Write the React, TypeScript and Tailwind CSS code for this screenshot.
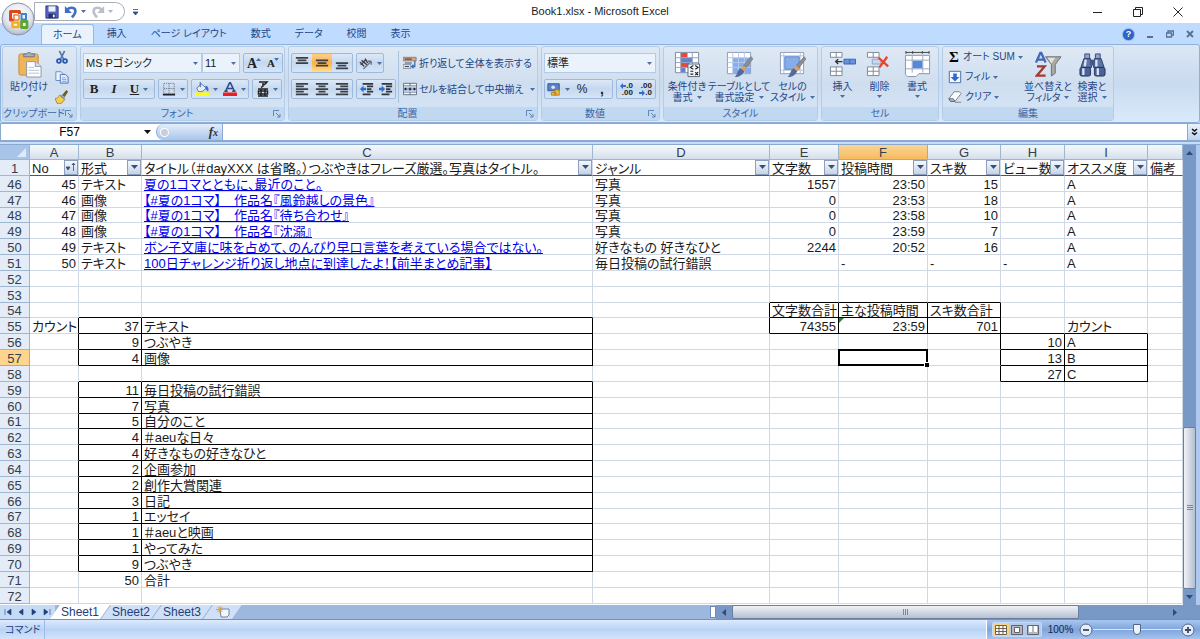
import { useState } from "react";
import type { ReactNode } from "react";
import clsx from "clsx";

type ColumnId = "A" | "B" | "C" | "D" | "E" | "F" | "G" | "H" | "I" | "J";

type CellData = {
  value: string;
  align?: "right";
  link?: boolean;
};

type RowData = {
  no: number;
  cells: Partial<Record<ColumnId, CellData>>;
};

const columns: { id: ColumnId; width: string }[] = [
  { id: "A", width: "w-[49px]" },
  { id: "B", width: "w-[63px]" },
  { id: "C", width: "w-[451px]" },
  { id: "D", width: "w-[177px]" },
  { id: "E", width: "w-[69px]" },
  { id: "F", width: "w-[89px]" },
  { id: "G", width: "w-[73px]" },
  { id: "H", width: "w-[64px]" },
  { id: "I", width: "w-[83px]" },
  { id: "J", width: "w-auto" },
];

const headings: Record<ColumnId, string> = {
  A: "No",
  B: "形式",
  C: "タイトル（＃dayXXX は省略。）つぶやきはフレーズ厳選。写真はタイトル。",
  D: "ジャンル",
  E: "文字数",
  F: "投稿時間",
  G: "スキ数",
  H: "ビュー数",
  I: "オススメ度",
  J: "備考",
};

// Ranges that carry a black outline and inner lines.
const boxes = [
  { from: "B", to: "C", top: 55, bottom: 57 },
  { from: "B", to: "C", top: 59, bottom: 70 },
  { from: "E", to: "G", top: 54, bottom: 55 },
  { from: "H", to: "I", top: 56, bottom: 58 },
];

const text = (value: string): CellData => ({ value });
const num = (value: string): CellData => ({ value, align: "right" });
const link = (value: string): CellData => ({ value, link: true });

function article(
  no: number,
  id: string,
  kind: string,
  title: string,
  genre: string,
  length: string,
  time: string,
  likes: string,
): RowData {
  return {
    no,
    cells: {
      A: num(id),
      B: text(kind),
      C: link(title),
      D: text(genre),
      E: num(length),
      F: num(time),
      G: num(likes),
      I: text("A"),
    },
  };
}

function tally(no: number, count: string, label: string): RowData {
  return { no, cells: { B: num(count), C: text(label) } };
}

const rows: RowData[] = [
  article(46, "45", "テキスト", "夏の1コマとともに、最近のこと。", "写真", "1557", "23:50", "15"),
  article(47, "46", "画像", "【#夏の1コマ】　作品名『風鈴越しの景色』", "写真", "0", "23:53", "18"),
  article(48, "47", "画像", "【#夏の1コマ】　作品名『待ち合わせ』", "写真", "0", "23:58", "10"),
  article(49, "48", "画像", "【#夏の1コマ】　作品名『沈溺』", "写真", "0", "23:59", "7"),
  article(
    50,
    "49",
    "テキスト",
    "ボン子文庫に味を占めて、のんびり早口言葉を考えている場合ではない。",
    "好きなもの 好きなひと",
    "2244",
    "20:52",
    "16",
  ),
  {
    no: 51,
    cells: {
      A: num("50"),
      B: text("テキスト"),
      C: link("100日チャレンジ折り返し地点に到達したよ！【前半まとめ記事】"),
      D: text("毎日投稿の試行錯誤"),
      F: text("-"),
      G: text("-"),
      H: text("-"),
      I: text("A"),
    },
  },
  { no: 52, cells: {} },
  { no: 53, cells: {} },
  {
    no: 54,
    cells: { E: text("文字数合計"), F: text("主な投稿時間"), G: text("スキ数合計") },
  },
  {
    no: 55,
    cells: {
      A: text("カウント"),
      B: num("37"),
      C: text("テキスト"),
      E: num("74355"),
      F: num("23:59"),
      G: num("701"),
      I: text("カウント"),
    },
  },
  { no: 56, cells: { B: num("9"), C: text("つぶやき"), H: num("10"), I: text("A") } },
  { no: 57, cells: { B: num("4"), C: text("画像"), H: num("13"), I: text("B") } },
  { no: 58, cells: { H: num("27"), I: text("C") } },
  tally(59, "11", "毎日投稿の試行錯誤"),
  tally(60, "7", "写真"),
  tally(61, "5", "自分のこと"),
  tally(62, "4", "＃aeuな日々"),
  tally(63, "4", "好きなもの好きなひと"),
  tally(64, "2", "企画参加"),
  tally(65, "2", "創作大賞関連"),
  tally(66, "3", "日記"),
  tally(67, "1", "エッセイ"),
  tally(68, "1", "＃aeuと映画"),
  tally(69, "1", "やってみた"),
  tally(70, "9", "つぶやき"),
  tally(71, "50", "合計"),
  { no: 72, cells: {} },
];

function isBoxed(column: string | undefined, row: number) {
  if (!column) return false;
  return boxes.some(
    (box) => column >= box.from && column <= box.to && row >= box.top && row <= box.bottom,
  );
}

function Caret({ className }: { className?: string }) {
  return (
    <svg viewBox="0 0 5 3" className={clsx("h-[3px] w-[5px] shrink-0", className)} aria-hidden="true">
      <path d="M0 0h5L2.5 3z" fill="#4a6fa8" />
    </svg>
  );
}

function Icon({ size, children }: { size: "sm" | "lg"; children: ReactNode }) {
  return (
    <svg
      viewBox={size === "sm" ? "0 0 16 16" : "0 0 28 28"}
      className={clsx("shrink-0", size === "sm" ? "h-[14px] w-[14px]" : "h-[27px] w-[27px]")}
      aria-hidden="true"
    >
      {children}
    </svg>
  );
}

/* ---------- icons ---------- */

function OfficeLogo() {
  return (
    <svg viewBox="0 0 34 34" className="h-[34px] w-[34px]" aria-hidden="true">
      <defs>
        <radialGradient id="orb" cx="50%" cy="35%" r="70%">
          <stop offset="0" stopColor="#ffffff" />
          <stop offset="0.6" stopColor="#e3e6ee" />
          <stop offset="1" stopColor="#a3acc0" />
        </radialGradient>
      </defs>
      <circle cx="17" cy="17" r="16" fill="url(#orb)" stroke="#8b93a5" />
      <path d="M13 18H9.500V9.500h9V12" fill="none" stroke="#d9491d" strokeWidth="3" strokeLinejoin="round" />
      <path d="M13 13h5v5h-5z" fill="#fff" stroke="#f0803c" strokeWidth="1.500" strokeLinejoin="round" />
      <path d="M20.500 12h4.500v5.500h-4.500z" fill="#e8f1fc" stroke="#3a86cf" strokeWidth="2" strokeLinejoin="round" />
      <path d="M11.500 20.500h6v4.500h-6z" fill="#fff6d8" stroke="#f3ad22" strokeWidth="2.500" strokeLinejoin="round" />
      <path d="M20.500 19.500h5.500v6h-5.500z" fill="#f1f9e8" stroke="#5fa637" strokeWidth="2.800" strokeLinejoin="round" />
    </svg>
  );
}

function SaveIcon() {
  return (
    <Icon size="sm">
      <path d="M1 1h13l1 1v13H1z" fill="#5563c4" stroke="#2c3788" />
      <path d="M4 1.500h8v6H4z" fill="#eef3fb" />
      <path d="M4 10h8v5H4z" fill="#26306f" />
      <path d="M9 11h2v3H9z" fill="#fff" />
    </Icon>
  );
}

function UndoIcon({ muted }: { muted?: boolean }) {
  return (
    <Icon size="sm">
      <g transform={muted ? "translate(16 0) scale(-1 1)" : undefined}>
        <path
          d="M3 6c3-4 10-4 10 1 0 3-2 5-4 7"
          fill="none"
          stroke={muted ? "#b9c0cb" : "#3f6fc6"}
          strokeWidth="3"
        />
        <path d="M1 1v8h8z" fill={muted ? "#b9c0cb" : "#3f6fc6"} />
      </g>
    </Icon>
  );
}

function PasteIcon() {
  return (
    <Icon size="lg">
      <rect x="3" y="3" width="20" height="22" rx="2" fill="#efb55a" stroke="#c98b35" />
      <path d="M8 6V3h3a3 3 0 0 1 5 0h3v3z" fill="#a9afb8" stroke="#6d7480" />
      <path d="M11 11h9l6 5v11H11z" fill="#fdfdfe" stroke="#8d97a8" />
      <path d="M20 11v5h6" fill="#d8e0ec" stroke="#8d97a8" />
      <path d="M13 17h6M13 20h11M13 23h11" stroke="#b7c3d6" />
    </Icon>
  );
}

function CutIcon() {
  return (
    <Icon size="sm">
      <path d="M5 1l5 10M11 1L6 11" stroke="#5c7bab" strokeWidth="2" />
      <circle cx="4.500" cy="12.500" r="2.200" fill="none" stroke="#2857ad" strokeWidth="2" />
      <circle cx="11.500" cy="12.500" r="2.200" fill="none" stroke="#2857ad" strokeWidth="2" />
    </Icon>
  );
}

function CopyIcon() {
  return (
    <Icon size="sm">
      <path d="M1 2h6l3 3v7H1z" fill="#eef4fd" stroke="#5f84c2" />
      <path d="M6 5h6l3 3v7H6z" fill="#dfeafb" stroke="#3f69b4" />
      <path d="M8 9h4M8 11h5M8 13h5" stroke="#7fa0d4" />
    </Icon>
  );
}

function BrushIcon() {
  return (
    <Icon size="sm">
      <path d="M13 0l2 2-4 6-3-2z" fill="#6c5a28" />
      <path d="M7 5l5 4-2 2-5-4z" fill="#8d9cb4" />
      <path d="M5 6l6 5c-2 3-4 5-8 5L0 10c2 0 4-2 5-4z" fill="#f2cf55" stroke="#a87e1e" />
    </Icon>
  );
}

function BorderIcon() {
  return (
    <Icon size="sm">
      <path d="M2 1.500h12v12H2zM8 1.500v12M2 7.500h12" fill="none" stroke="#6d7786" strokeDasharray="1.500 1" />
      <path d="M1 14.500h14" stroke="#222" strokeWidth="2" />
    </Icon>
  );
}

function FillColorIcon() {
  return (
    <Icon size="sm">
      <path d="M2 7l5-5 6 5-5 4H4z" fill="#e9eef6" stroke="#4b6ea8" />
      <path d="M6 0v6" stroke="#4b6ea8" strokeWidth="1.300" />
      <path d="M12 4c3 1 4 3 3 7l-3-3z" fill="#3b6fc8" />
      <path d="M0 12h16v4H0z" fill="#ffff00" />
    </Icon>
  );
}

function FontColorIcon() {
  return (
    <Icon size="sm">
      <path d="M3 10.500L7.500 1h1L13 10.500M5 7.500h6M1.500 10.500h4M10.500 10.500h4" fill="none" stroke="#2d4d92" strokeWidth="1.800" />
      <path d="M0 12h16v4H0z" fill="#ee1c1c" />
    </Icon>
  );
}

function LinesIcon({ paths }: { paths: string }) {
  return (
    <Icon size="sm">
      <path d={paths} stroke="#3b3f46" strokeWidth="2" fill="none" />
    </Icon>
  );
}

const linePaths = {
  top: "M1 2h14M3 5h10M1 8h14",
  middle: "M1 5h14M3 8h10M1 11h14",
  bottom: "M1 8h14M3 11h10M1 14h14",
  left: "M1 2h14M1 5h9M1 8h14M1 11h9M1 14h14",
  center: "M1 2h14M4 5h8M1 8h14M4 11h8M1 14h14",
  right: "M1 2h14M6 5h9M1 8h14M6 11h9M1 14h14",
};

function IndentIcon({ inward }: { inward?: boolean }) {
  return (
    <Icon size="sm">
      <path d="M3 2h12M8 5h7M8 8h5M8 11h7M3 14h9" stroke="#33373d" strokeWidth="2" />
      <path d={inward ? "M7 8L3 4v2.500H0v3h3V12z" : "M0 8l4-4v2.500h3v3H4V12z"} fill="#2f6bd0" />
    </Icon>
  );
}

function OrientationIcon() {
  return (
    <Icon size="sm">
      <path d="M1 7l5 5M3 5l6 5M7 3l3 5M2 10l6-6" stroke="#3a3f48" strokeWidth="1.600" />
      <path d="M5 15l9-9M14 6v4M14 6h-4" stroke="#6a7382" strokeWidth="1.500" fill="none" />
    </Icon>
  );
}

function WrapIcon() {
  return (
    <Icon size="sm">
      <path d="M0 1.500h15v4H0z" fill="#e3a273" stroke="#8b7a70" />
      <path d="M0 10h9v4H0z" fill="#f5f7fb" stroke="#6b7789" />
      <path d="M2 3.500h8M2 12h5M2 8h8" stroke="#44506a" strokeWidth="1.300" />
      <path d="M13.500 5.500V12H10M12 10l-2 2 2 2" stroke="#3c6dbb" strokeWidth="1.500" fill="none" />
    </Icon>
  );
}

function MergeIcon() {
  return (
    <Icon size="sm">
      <path d="M.5 1.500h15v13H.5z" fill="#f5f8fd" stroke="#58647a" />
      <path d="M.5 4.500h15M.5 11.500h15M8 1.500v3M8 11.500v3" stroke="#58647a" />
      <path d="M1 5h14v6H1z" fill="#b9d0f2" />
      <path d="M1 8h4M15 8h-4M3 6.500v3M13 6.500v3" stroke="#222" strokeWidth="1.300" />
      <path d="M6.500 6.500h3v3h-3z" fill="#333" />
    </Icon>
  );
}

function CurrencyIcon() {
  return (
    <Icon size="sm">
      <path d="M1 2h13v8H1z" fill="#5d83c9" stroke="#2c4c8d" />
      <circle cx="7" cy="6" r="2" fill="#dbe6f8" />
      <path d="M9 9h5v6H9zM5 12h5v3H5z" fill="#f0b93c" stroke="#b57e1c" />
    </Icon>
  );
}

function DecimalLabel({ top, bottom, left }: { top: string; bottom: string; left?: boolean }) {
  return (
    <span className="flex flex-col items-end text-[8px] leading-[7px] font-bold text-[#222]">
      <span className="flex items-center">
        {left && <DecimalArrow path="M0 3l3-3v2h3v2H3v2z" />}
        {top}
      </span>
      <span className="flex items-center">
        {!left && <DecimalArrow path="M6 3L3 0v2H0v2h3v2z" />}
        {bottom}
      </span>
    </span>
  );
}

function DecimalArrow({ path }: { path: string }) {
  return (
    <svg viewBox="0 0 6 6" className="h-[6px] w-[6px]" aria-hidden="true">
      <path d={path} fill="#2f6bd0" />
    </svg>
  );
}

function ConditionalIcon() {
  return (
    <Icon size="lg">
      <path d="M1.500 1.500h24v21h-24z" fill="#fff" stroke="#7d8ba3" />
      <path d="M7 2h7v5H7z" fill="#e8483a" />
      <path d="M7 7h12v5H7z" fill="#5a84d4" />
      <path d="M7 12h9v5H7z" fill="#e8483a" />
      <path d="M7 17h5v5H7z" fill="#5a84d4" />
      <path d="M1.500 7h24M1.500 12h24M1.500 17h24M7 1.500v21M19 1.500v21" stroke="#93a2bb" />
      <path d="M14.500 13.500h12v13h-12z" fill="#f3f5f8" stroke="#5c6878" />
      <path d="M20 15l-3 2 3 2M17 21h3M17 24h3M22 15l3 2-3 2M22 22l3 3M25 22l-3 3" stroke="#222" strokeWidth="1.200" fill="none" />
    </Icon>
  );
}

function TableStyleIcon() {
  return (
    <Icon size="lg">
      <path d="M1.500 1.500h24v22h-24z" fill="#fff" stroke="#8b9bb8" />
      <path d="M7 7h18v16H7z" fill="#86ace9" />
      <path d="M1.500 7h24M1.500 12h24M1.500 17h24M7 1.500v22M13 1.500v22M19 1.500v22" stroke="#b8c9e6" />
      <PaintBrush />
    </Icon>
  );
}

function CellStyleIcon() {
  return (
    <Icon size="lg">
      <path d="M1.500 1.500h24v22h-24z" fill="#fff" stroke="#8b9bb8" />
      <path d="M1.500 5h24M1.500 20h24M5 1.500v22M22 1.500v22" stroke="#b8c2d3" />
      <path d="M6 6h15v13H6z" fill="#86ace9" stroke="#5b86d0" />
      <PaintBrush />
    </Icon>
  );
}

function PaintBrush() {
  return (
    <>
      <path d="M26 6l2 2-7 9-3-2z" fill="#8b8f98" stroke="#5f646e" strokeWidth="0.600" />
      <path d="M18 15l3 3-2 3-4-3z" fill="#d9a066" />
      <path d="M15 18l4 3c-2 4-5 6-10 6 3-2 2-6 6-9z" fill="#56699c" />
    </>
  );
}

function CellGrid({ kind }: { kind: "insert" | "delete" }) {
  return (
    <Icon size="lg">
      <path d="M1.500 1.500h12v5h-12zM7.500 1.500v5M1.500 16.500h12v9h-12zM7.500 16.500v9M1.500 21h12" fill="#fff" stroke="#7c8799" />
      {kind === "insert" ? (
        <>
          <path d="M15.500 8.500h12v5h-12zM21.500 8.500v5" fill="#6792e0" stroke="#3f63a8" />
          <path d="M14 11H7M9.500 8.500L7 11l2.500 2.500" stroke="#333" strokeWidth="1.500" fill="none" />
        </>
      ) : (
        <>
          <path d="M6.500 8.500h9v5h-9z" fill="#c5d6f2" stroke="#8ca3cc" />
          <path d="M13 7l10 9M22 6l-8 11" stroke="#e8432b" strokeWidth="2.400" />
        </>
      )}
    </Icon>
  );
}

function CellFormatIcon() {
  return (
    <Icon size="lg">
      <path d="M2 1.500h24M2 0v3M9 0v3M19 0v3M26 0v3" stroke="#444" />
      <path d="M1.500 4.500h25v19h-11l-3 3h-9l-2-2z" fill="#fff" stroke="#8794ab" />
      <path d="M1.500 9.500h25M1.500 18.500h25M8.500 4.500v18M19.500 4.500v18" stroke="#9aa8bf" />
      <path d="M9 10h10v8H9z" fill="#5587dc" />
    </Icon>
  );
}

function FillDownIcon() {
  return (
    <Icon size="sm">
      <path d="M1.500 1.500h13v13h-13z" fill="#f4f8ff" stroke="#3f62a5" />
      <path d="M6 4h4v4h3l-5 5-5-5h3z" fill="#2f66cf" />
    </Icon>
  );
}

function EraserIcon() {
  return (
    <Icon size="sm">
      <path d="M7 2h6l2 2-7 9H3L1 10z" fill="#fdfdfd" stroke="#6d7684" />
      <path d="M1 10h5l2 3H3z" fill="#b7bfcb" stroke="#555d6a" />
      <path d="M8 14h7" stroke="#777" />
    </Icon>
  );
}

function SortFilterIcon() {
  return (
    <Icon size="lg">
      <path d="M11 6h16l-6 8v9l-4 3V14z" fill="#a9a9a6" stroke="#6e6f70" />
      <path d="M13 7h8l-4 6z" fill="#e2e2df" />
      <path d="M1 12L5.500 2h1L11 12M3 9h6" stroke="#4169ba" strokeWidth="2.400" fill="none" />
      <path d="M2 16h8L2 25.500h9" stroke="#a33a32" strokeWidth="2.400" fill="none" />
    </Icon>
  );
}

function BinocularsIcon() {
  return (
    <Icon size="lg">
      <path d="M6 3h5v5H6zM17 3h5v5h-5z" fill="#8ea2cb" stroke="#3a4c78" />
      <path d="M5 8h7l1 9H2zM16 8h7l3 9H15z" fill="#5e75aa" stroke="#2c3b62" />
      <path d="M12 9h4v6h-4z" fill="#43568a" />
      <rect x="1" y="17" width="11" height="9" rx="2" fill="#4a6199" stroke="#25345a" />
      <rect x="16" y="17" width="11" height="9" rx="2" fill="#4a6199" stroke="#25345a" />
      <path d="M4.500 18v7M19.500 18v7M7 9l-1 7M18 9v7" stroke="#dbe5f8" strokeWidth="2.400" />
    </Icon>
  );
}

/* ---------- ribbon ---------- */

type RibbonGroupProps = {
  title: string;
  width: string;
  launcher?: boolean;
  children: ReactNode;
};

function RibbonGroup({ title, width, launcher, children }: RibbonGroupProps) {
  return (
    <section
      aria-label={title}
      className={clsx(
        "flex shrink-0 flex-col overflow-hidden rounded-[3px] border border-[#b4cce8] bg-gradient-to-b from-[#dfe9f5] via-[#cfdeef] to-[#d5e5f7]",
        width,
      )}
    >
      <div className="flex h-[60px] px-[2px]">{children}</div>
      <div className="flex h-[13px] items-center bg-[#c1d8f1] text-[10px] leading-[12px] text-[#3f66a6]">
        <span className="flex-1 text-center whitespace-nowrap">{title}</span>
        {launcher && (
          <button type="button" aria-label={`${title}の詳細`} className="mr-[3px] h-[8px] w-[8px]">
            <svg viewBox="0 0 8 8" className="h-[8px] w-[8px]">
              <path d="M.5 6V.5H6M3 3l4 4M7 4v3H4" fill="none" stroke="#6285b8" />
            </svg>
          </button>
        )}
      </div>
    </section>
  );
}

function ButtonStrip({ children }: { children: ReactNode }) {
  return (
    <div className="flex h-[20px] items-stretch rounded-[2px] border border-[#9db9dd] bg-gradient-to-b from-[#dce8f7] via-[#c6d8ee] to-[#d6e5f6]">
      {children}
    </div>
  );
}

type ToolButtonProps = {
  label: string;
  width?: string;
  caret?: boolean;
  active?: boolean;
  children: ReactNode;
};

function ToolButton({ label, width = "w-[20px]", caret, active, children }: ToolButtonProps) {
  return (
    <button
      type="button"
      aria-label={label}
      className={clsx(
        "flex items-center justify-center gap-[4px] text-[#222]",
        width,
        active && "bg-gradient-to-b from-[#fbd08a] via-[#fbb04a] to-[#ffe08a]",
      )}
    >
      {children}
      {caret && <Caret />}
    </button>
  );
}

type LargeButtonProps = {
  icon: ReactNode;
  lines: string[];
  width: string;
};

function LargeButton({ icon, lines, width }: LargeButtonProps) {
  return (
    <button
      type="button"
      className={clsx(
        "flex shrink-0 flex-col items-center justify-start pt-[4px] text-[10px] text-[#1e4586]",
        width,
      )}
    >
      <span className="mb-[3px]">{icon}</span>
      {lines.map((line, index) => (
        <span key={line} className="flex items-center gap-[4px] leading-[11px] whitespace-nowrap">
          {line}
          {index === 1 && <Caret />}
        </span>
      ))}
      {lines.length === 1 && <Caret className="mt-[3px]" />}
    </button>
  );
}

function RibbonSelect({ label, options, width }: { label: string; options: string[]; width: string }) {
  return (
    <span className={clsx("relative flex h-[20px]", width)}>
      <select
        aria-label={label}
        className="w-full appearance-none border border-[#b3cbe8] bg-[#eaf2fc] pl-[2px] text-[11px] leading-[16px] text-[#1c1c1c]"
      >
        {options.map((option) => (
          <option key={option}>{option}</option>
        ))}
      </select>
      <Caret className="pointer-events-none absolute top-[9px] right-[4px]" />
    </span>
  );
}

function Ribbon() {
  return (
    <div className="flex h-[79px] shrink-0 gap-[3px] overflow-hidden rounded-[3px] border border-[#8fb0da] bg-gradient-to-b from-[#dbe7f4] via-[#c9dbef] to-[#d9eafc] px-px py-px">
      <RibbonGroup title="クリップボード" width="w-[75px]" launcher>
        <LargeButton icon={<PasteIcon />} lines={["貼り付け"]} width="w-[48px]" />
        <div className="flex flex-col justify-between py-[3px] pl-[2px]">
          <button type="button" aria-label="切り取り"><CutIcon /></button>
          <button type="button" aria-label="コピー"><CopyIcon /></button>
          <button type="button" aria-label="書式のコピー"><BrushIcon /></button>
        </div>
      </RibbonGroup>

      <RibbonGroup title="フォント" width="w-[205px]" launcher>
        <div className="flex flex-col gap-[6px] pt-[6px]">
          <div className="flex">
            <RibbonSelect label="フォント" options={["MS Pゴシック"]} width="w-[119px]" />
            <RibbonSelect label="フォント サイズ" options={["11"]} width="w-[38px]" />
            <div className="ml-[3px]">
              <ButtonStrip>
                <ToolButton label="フォントの拡大">
                  <span className="font-['Liberation_Serif',serif] text-[14px] font-bold">A</span>
                  <Caret className="-ml-[5px] mb-[8px] rotate-180" />
                </ToolButton>
                <ToolButton label="フォントの縮小" width="w-[18px]">
                  <span className="font-['Liberation_Serif',serif] text-[11px] font-bold">A</span>
                  <Caret className="-ml-[5px] mb-[8px]" />
                </ToolButton>
              </ButtonStrip>
            </div>
          </div>
          <div className="flex gap-[3px] font-['Liberation_Serif',serif]">
            <ButtonStrip>
              <ToolButton label="太字"><b className="text-[13px]">B</b></ToolButton>
              <ToolButton label="斜体"><b className="text-[13px] italic">I</b></ToolButton>
              <ToolButton label="下線" width="w-[30px]" caret>
                <b className="text-[13px] underline">U</b>
              </ToolButton>
            </ButtonStrip>
            <ButtonStrip>
              <ToolButton label="罫線" width="w-[28px]" caret><BorderIcon /></ToolButton>
            </ButtonStrip>
            <ButtonStrip>
              <ToolButton label="塗りつぶしの色" width="w-[28px]" caret><FillColorIcon /></ToolButton>
              <ToolButton label="フォントの色" width="w-[28px]" caret><FontColorIcon /></ToolButton>
            </ButtonStrip>
            <ButtonStrip>
              <ToolButton label="ふりがな" width="w-[28px]" caret>
                <svg viewBox="0 0 12 16" className="h-[16px] w-[12px]" aria-hidden="true">
                  <path
                    d="M2 1h8L7 4M6 2v3L4 6.500M1 8h10M1 15h10M4 8v7M8 8v7M1.500 10h9v3h-9z"
                    fill="none"
                    stroke="#222"
                    strokeWidth="1.500"
                  />
                </svg>
              </ToolButton>
            </ButtonStrip>
          </div>
        </div>
      </RibbonGroup>

      <RibbonGroup title="配置" width="w-[250px]" launcher>
        <div className="flex flex-col gap-[6px] pt-[6px]">
          <div className="flex gap-[3px]">
            <ButtonStrip>
              <ToolButton label="上揃え"><LinesIcon paths={linePaths.top} /></ToolButton>
              <ToolButton label="上下中央揃え" active><LinesIcon paths={linePaths.middle} /></ToolButton>
              <ToolButton label="下揃え"><LinesIcon paths={linePaths.bottom} /></ToolButton>
            </ButtonStrip>
            <ButtonStrip>
              <ToolButton label="方向" width="w-[26px]" caret><OrientationIcon /></ToolButton>
            </ButtonStrip>
          </div>
          <div className="flex gap-[3px]">
            <ButtonStrip>
              <ToolButton label="左揃え"><LinesIcon paths={linePaths.left} /></ToolButton>
              <ToolButton label="中央揃え"><LinesIcon paths={linePaths.center} /></ToolButton>
              <ToolButton label="右揃え"><LinesIcon paths={linePaths.right} /></ToolButton>
            </ButtonStrip>
            <ButtonStrip>
              <ToolButton label="インデントを減らす" width="w-[19px]"><IndentIcon /></ToolButton>
              <ToolButton label="インデントを増やす" width="w-[19px]"><IndentIcon inward /></ToolButton>
            </ButtonStrip>
          </div>
        </div>
        <div className="my-[4px] ml-[2px] flex flex-col gap-[6px] border-l border-[#a9c2e0] pt-[2px] pl-[4px] text-[10px] text-[#1e4586]">
          <button type="button" className="flex h-[20px] items-center gap-[2px] whitespace-nowrap">
            <WrapIcon />
            折り返して全体を表示する
          </button>
          <button type="button" className="flex h-[20px] items-center gap-[2px] whitespace-nowrap">
            <MergeIcon />
            セルを結合して中央揃え
            <Caret className="ml-[4px]" />
          </button>
        </div>
      </RibbonGroup>

      <RibbonGroup title="数値" width="w-[119px]" launcher>
        <div className="flex flex-col gap-[6px] pt-[6px]">
          <RibbonSelect label="表示形式" options={["標準"]} width="w-[112px]" />
          <div className="flex gap-[3px]">
            <ButtonStrip>
              <ToolButton label="通貨表示形式" width="w-[27px]" caret><CurrencyIcon /></ToolButton>
              <ToolButton label="パーセント"><span className="text-[12px]">%</span></ToolButton>
              <ToolButton label="桁区切り"><b className="text-[14px]">,</b></ToolButton>
            </ButtonStrip>
            <ButtonStrip>
              <ToolButton label="小数点以下を増やす" width="w-[19px]">
                <DecimalLabel top=".0" bottom=".00" left />
              </ToolButton>
              <ToolButton label="小数点以下を減らす" width="w-[19px]">
                <DecimalLabel top=".00" bottom=".0" />
              </ToolButton>
            </ButtonStrip>
          </div>
        </div>
      </RibbonGroup>

      <RibbonGroup title="スタイル" width="w-[155px]">
        <LargeButton icon={<ConditionalIcon />} lines={["条件付き", "書式"]} width="w-[42px]" />
        <LargeButton icon={<TableStyleIcon />} lines={["テーブルとして", "書式設定"]} width="w-[62px]" />
        <LargeButton icon={<CellStyleIcon />} lines={["セルの", "スタイル"]} width="w-[45px]" />
      </RibbonGroup>

      <RibbonGroup title="セル" width="w-[118px]">
        <LargeButton icon={<CellGrid kind="insert" />} lines={["挿入"]} width="w-[37px]" />
        <LargeButton icon={<CellGrid kind="delete" />} lines={["削除"]} width="w-[37px]" />
        <LargeButton icon={<CellFormatIcon />} lines={["書式"]} width="w-[38px]" />
      </RibbonGroup>

      <RibbonGroup title="編集" width="w-[172px]">
        <div className="flex w-[78px] flex-col justify-between py-[2px] pl-[3px] text-[10px] leading-[16px] text-[#1e4586]">
          <button type="button" className="flex items-center gap-[3px] whitespace-nowrap">
            <span className="w-[12px] text-center font-['Liberation_Serif',serif] text-[15px] font-bold text-black">Σ</span>
            オート SUM
            <Caret />
          </button>
          <button type="button" className="flex items-center gap-[3px] whitespace-nowrap">
            <FillDownIcon />
            フィル
            <Caret />
          </button>
          <button type="button" className="flex items-center gap-[3px] whitespace-nowrap">
            <EraserIcon />
            クリア
            <Caret />
          </button>
        </div>
        <LargeButton icon={<SortFilterIcon />} lines={["並べ替えと", "フィルタ"]} width="w-[50px]" />
        <LargeButton icon={<BinocularsIcon />} lines={["検索と", "選択"]} width="w-[38px]" />
      </RibbonGroup>
    </div>
  );
}

/* ---------- window chrome ---------- */

function TitleBar() {
  return (
    <header className="grid h-[23px] shrink-0 grid-cols-[1fr_auto_1fr] items-center bg-white">
      <div className="ml-[34px] flex items-center gap-[8px]">
        <div className="flex h-[19px] w-[91px] items-center gap-[5px] rounded-r-full border border-[#a9adb5] pl-[10px]">
          <button type="button" aria-label="上書き保存"><SaveIcon /></button>
          <button type="button" aria-label="元に戻す" className="flex items-center gap-[3px]">
            <UndoIcon />
            <Caret />
          </button>
          <button type="button" aria-label="やり直し" className="flex items-center gap-[3px]">
            <UndoIcon muted />
            <Caret className="opacity-50" />
          </button>
        </div>
        <button type="button" aria-label="クイック アクセス ツール バーのユーザー設定">
          <svg viewBox="0 0 5 6" className="h-[6px] w-[5px]">
            <path d="M0 .5h5M0 3h5L2.500 6z" stroke="#2c4d86" fill="#2c4d86" strokeWidth="0.800" />
          </svg>
        </button>
      </div>
      <h1 className="text-[11px] text-[#222]">Book1.xlsx - Microsoft Excel</h1>
      <div className="flex items-center justify-end gap-[30px] pr-[17px] text-[#222]">
        <button type="button" aria-label="最小化">
          <svg viewBox="0 0 10 10" className="h-[10px] w-[10px]"><path d="M0 5.500h9" stroke="currentColor" /></svg>
        </button>
        <button type="button" aria-label="元のサイズに戻す">
          <svg viewBox="0 0 10 10" className="h-[10px] w-[10px]">
            <path d="M.5 2.500h7v7h-7zM2.500 2.500v-2h7v7h-2" fill="none" stroke="currentColor" />
          </svg>
        </button>
        <button type="button" aria-label="閉じる">
          <svg viewBox="0 0 10 10" className="h-[10px] w-[10px]">
            <path d="M.5.5l9 9M9.500.5l-9 9" stroke="currentColor" />
          </svg>
        </button>
      </div>
    </header>
  );
}

const ribbonTabs = ["ホーム", "挿入", "ページ レイアウト", "数式", "データ", "校閲", "表示"];

function TabBar() {
  return (
    <div className="flex h-[21px] shrink-0 items-end justify-between pl-[41px]">
      <nav className="flex h-[20px] gap-[2px]" aria-label="リボン">
        {ribbonTabs.map((tab, index) => (
          <button
            key={tab}
            type="button"
            className={clsx(
              "px-[11px] text-[10px] leading-[18px] whitespace-nowrap text-[#1e4586]",
              index === 0 && "rounded-t-[3px] border border-b-0 border-[#9ab9e2] bg-[#eaf2fc]",
            )}
          >
            {tab}
          </button>
        ))}
      </nav>
      <div className="flex h-[20px] items-center gap-[12px] pr-[6px] text-[#5b6f8f]">
        <button
          type="button"
          aria-label="ヘルプ"
          className="flex h-[11px] w-[11px] items-center justify-center rounded-full bg-[#2d62c8] text-[9px] leading-[10px] font-bold text-white ring-1 ring-[#8fb0e6]"
        >
          ?
        </button>
        <button type="button" aria-label="ウィンドウの最小化">
          <svg viewBox="0 0 8 8" className="h-[8px] w-[8px]"><path d="M1 7h6" stroke="currentColor" strokeWidth="2" /></svg>
        </button>
        <button type="button" aria-label="ウィンドウを元に戻す">
          <svg viewBox="0 0 8 8" className="h-[8px] w-[8px]">
            <path d="M.5 3h5v4h-5zM2 3V1h5.500v4H6" fill="none" stroke="currentColor" strokeWidth="1.300" />
          </svg>
        </button>
        <button type="button" aria-label="ウィンドウを閉じる">
          <svg viewBox="0 0 8 8" className="h-[8px] w-[8px]">
            <path d="M1 1l6 6M7 1L1 7" stroke="currentColor" strokeWidth="1.800" />
          </svg>
        </button>
      </div>
    </div>
  );
}

function FormulaBar() {
  return (
    <div className="flex h-[18px] shrink-0 border-y border-[#8aa9d2] bg-white">
      <input
        aria-label="名前ボックス"
        defaultValue="F57"
        className="w-[138px] border-l border-[#8aa9d2] bg-white text-center text-[12px] text-black"
      />
      <button type="button" aria-label="名前の一覧" className="flex w-[18px] items-center justify-center">
        <svg viewBox="0 0 7 4" className="h-[4px] w-[7px]"><path d="M0 0h7L3.500 4z" fill="#111" /></svg>
      </button>
      <div className="flex w-[67px] items-center justify-between rounded-l-full border-r border-l border-[#8aa9d2] bg-gradient-to-b from-[#e4eefb] to-[#a9c6ea] pr-[4px] pl-[4px]">
        <span className="h-[7px] w-[7px] rounded-full bg-[#c9ced8] ring-1 ring-white" />
        <button
          type="button"
          aria-label="関数の挿入"
          className="font-['Liberation_Serif',serif] text-[13px] leading-[14px] font-bold text-[#333] italic"
        >
          f<span className="text-[10px]">x</span>
        </button>
      </div>
      <input aria-label="数式バー" className="min-w-0 flex-1 bg-white px-[4px] text-[12px]" />
      <button
        type="button"
        aria-label="数式バーの展開"
        className="flex w-[13px] items-center justify-center border-l border-[#8aa9d2] bg-gradient-to-b from-[#eaf2fc] to-[#bdd3ef]"
      >
        <svg viewBox="0 0 7 8" className="h-[8px] w-[7px]">
          <path d="M1 1l2.500 2L6 1M1 4.500l2.500 2L6 4.500" fill="none" stroke="#111" strokeWidth="1.500" />
        </svg>
      </button>
    </div>
  );
}

/* ---------- sheet ---------- */

function FilterButton({ name, sorted }: { name: string; sorted?: boolean }) {
  return (
    <button
      type="button"
      aria-label={`${name}のフィルタ`}
      className="absolute right-0 bottom-0 flex h-[15px] w-[14px] items-center justify-center border border-[#8c9fbd] bg-gradient-to-b from-[#f5f8fc] to-[#c6d3e6]"
    >
      {sorted ? (
        <svg viewBox="0 0 10 10" className="h-[10px] w-[10px]">
          <path d="M0 5h4L2 8zM7.500 9V1M6 3l1.500-2L9 3" fill="#34507f" stroke="#34507f" strokeWidth="0.800" />
        </svg>
      ) : (
        <svg viewBox="0 0 7 4" className="h-[4px] w-[7px]"><path d="M0 0h7L3.500 4z" fill="#34507f" /></svg>
      )}
    </button>
  );
}

type SheetCellProps = {
  row: RowData;
  index: number;
  selected: boolean;
};

function SheetCell({ row, index, selected }: SheetCellProps) {
  const id = columns[index].id;
  const cell = row.cells[id];
  const boxed = isBoxed(id, row.no);
  const darkRight = boxed || isBoxed(columns[index + 1]?.id, row.no);
  const darkBottom = boxed || isBoxed(id, row.no + 1);

  return (
    <td
      className={clsx(
        "relative border-r border-b px-[2px] pt-px pb-0 align-bottom whitespace-nowrap",
        cell?.align === "right" && "text-right",
        darkRight ? "border-r-black" : "border-r-[#d0d7e5]",
        darkBottom ? "border-b-black" : "border-b-[#d0d7e5]",
      )}
    >
      {cell?.link ? (
        <a href="#" className="text-[#0000ee] underline">{cell.value}</a>
      ) : (
        cell?.value
      )}
      {id === "F" && row.no === 55 && (
        <svg viewBox="0 0 5 5" className="absolute top-0 left-0 h-[5px] w-[5px]" aria-hidden="true">
          <path d="M0 0h5L0 5z" fill="#1d8a2c" />
        </svg>
      )}
      {selected && (
        <span className="absolute -inset-px z-10 border-2 border-black">
          <span className="absolute -right-[3px] -bottom-[3px] h-[5px] w-[5px] border-t border-l border-white bg-black" />
        </span>
      )}
    </td>
  );
}

const headerCell =
  "border-r border-b border-[#9eb6ce] bg-gradient-to-b from-[#f6f9fc] to-[#d5dfeb] p-0 pt-px align-bottom font-normal text-[#34404f]";
const selectedHeaderCell =
  "border-r border-b border-[#e0a04a] bg-gradient-to-b from-[#f9d594] to-[#f6bb5c] p-0 pt-px align-bottom font-normal text-[#34404f]";
const rowHeaderCell =
  "border-r border-b border-[#9eb6ce] bg-[#e4ecf7] p-0 pt-px text-center align-bottom font-normal text-[#34404f]";
const selectedRowHeaderCell =
  "border-r border-b border-[#e0a04a] bg-[#ffd58d] p-0 pt-px text-center align-bottom font-normal text-[#34404f]";

function Sheet() {
  return (
    <table className="h-full w-full table-fixed border-separate border-spacing-0 bg-white text-[13px] leading-[13px] text-[#1a1a1a]">
      <colgroup>
        <col className="w-[30px]" />
        {columns.map((column) => (
          <col key={column.id} className={column.width} />
        ))}
      </colgroup>
      <thead>
        <tr>
          <th className="border-r border-b border-[#9eb6ce] bg-[#a9c4e9] p-0">
            <svg viewBox="0 0 9 9" className="mr-[3px] ml-auto h-[9px] w-[9px]" aria-hidden="true">
              <path d="M9 0v9H0z" fill="#dfeafa" />
            </svg>
          </th>
          {columns.map(({ id }) => (
            <th key={id} scope="col" className={id === "F" ? selectedHeaderCell : headerCell}>
              {id === "J" ? "" : id}
            </th>
          ))}
        </tr>
      </thead>
      <tbody>
        <tr>
          <th scope="row" className={rowHeaderCell}>1</th>
          {columns.map(({ id }) => (
            <td
              key={id}
              className="relative border-r border-b border-r-[#d0d7e5] border-b-[#555] p-0 pt-px pl-[2px] align-bottom whitespace-nowrap"
            >
              {headings[id]}
              {id !== "J" && <FilterButton name={headings[id]} sorted={id === "A"} />}
            </td>
          ))}
        </tr>
        {rows.map((row) => (
          <tr key={row.no}>
            <th scope="row" className={row.no === 57 ? selectedRowHeaderCell : rowHeaderCell}>
              {row.no}
            </th>
            {columns.map((column, index) => (
              <SheetCell
                key={column.id}
                row={row}
                index={index}
                selected={column.id === "F" && row.no === 57}
              />
            ))}
          </tr>
        ))}
      </tbody>
    </table>
  );
}

function VerticalScrollbar() {
  return (
    <div className="flex w-[13px] shrink-0 flex-col items-center bg-[#7899c5]">
      <button type="button" aria-label="上へスクロール" className="flex h-[16px] items-center">
        <svg viewBox="0 0 7 4" className="h-[4px] w-[7px]"><path d="M0 4h7L3.500 0z" fill="#2f4a77" /></svg>
      </button>
      <div className="flex w-full flex-1 flex-col">
        <div className="grow-[268] basis-0" />
        <div className="flex grow-[162] basis-0 flex-col items-center justify-center gap-px rounded-[2px] border border-[#6a7f9f] bg-gradient-to-r from-[#f1f3f7] to-[#b4bfd0]">
          <span className="h-px w-[6px] bg-[#7d8898]" />
          <span className="h-px w-[6px] bg-[#7d8898]" />
          <span className="h-px w-[6px] bg-[#7d8898]" />
        </div>
      </div>
      <button type="button" aria-label="下へスクロール" className="flex h-[16px] items-center">
        <svg viewBox="0 0 7 4" className="h-[4px] w-[7px]"><path d="M0 0h7L3.500 4z" fill="#2f4a77" /></svg>
      </button>
    </div>
  );
}

const navButtons = [
  { label: "先頭のシート", path: "M1 1v6M7 1L3 4l4 3z" },
  { label: "前のシート", path: "M6 1L2 4l4 3z" },
  { label: "次のシート", path: "M2 1l4 3-4 3z" },
  { label: "最後のシート", path: "M7 1v6M1 1l4 3-4 3z" },
];

function SheetTabs() {
  const [active, setActive] = useState("Sheet1");

  return (
    <div className="flex h-[14px] shrink-0 bg-[#9db8de]">
      <div className="flex w-[55px] items-center gap-[5px] bg-[#c5daf5] pl-[4px]">
        {navButtons.map((button) => (
          <button key={button.label} type="button" aria-label={button.label}>
            <svg viewBox="0 0 8 8" className="h-[8px] w-[8px]">
              <path d={button.path} fill="#1e3f7c" stroke="#1e3f7c" strokeWidth="0.600" />
            </svg>
          </button>
        ))}
      </div>
      {["Sheet1", "Sheet2", "Sheet3"].map((name) => (
        <button
          key={name}
          type="button"
          onClick={() => setActive(name)}
          className={clsx(
            "w-[51px] -skew-x-[35deg] border-r border-[#8aa6cf] text-[12px] leading-[14px] text-[#1e3f7c]",
            active === name ? "bg-white" : "bg-[#cfe0f7]",
          )}
        >
          <span className="block skew-x-[35deg]">{name}</span>
        </button>
      ))}
      <button
        type="button"
        aria-label="ワークシートの挿入"
        className="flex w-[30px] -skew-x-[35deg] items-center justify-center border-r border-[#8aa6cf] bg-[#cfe0f7]"
      >
        <svg viewBox="0 0 14 12" className="h-[12px] w-[14px] skew-x-[35deg]">
          <path d="M4 3h9v6l-2 2H5z" fill="#f4f7fc" stroke="#6d84ab" />
          <path d="M4 0v7M0 3.500h7M1.500 1l5 5M6.500 1l-5 5" stroke="#e89a2c" />
        </svg>
      </button>
      <div className="flex-1" />
      <span className="my-px w-[6px] border border-[#6e8cba] bg-white" />
      <div className="flex w-[484px] items-stretch bg-[#7899c5]">
        <button type="button" aria-label="左へスクロール" className="flex w-[16px] items-center justify-center">
          <svg viewBox="0 0 4 7" className="h-[7px] w-[4px]"><path d="M4 0v7L0 3.500z" fill="#2f4a77" /></svg>
        </button>
        <div className="flex w-[347px] items-center justify-center gap-px rounded-[2px] border border-[#6a7f9f] bg-gradient-to-b from-[#f1f3f7] to-[#b4bfd0]">
          <span className="h-[6px] w-px bg-[#7d8898]" />
          <span className="h-[6px] w-px bg-[#7d8898]" />
          <span className="h-[6px] w-px bg-[#7d8898]" />
        </div>
        <div className="flex-1" />
        <button type="button" aria-label="右へスクロール" className="mr-[18px] flex w-[14px] items-center justify-center">
          <svg viewBox="0 0 4 7" className="h-[7px] w-[4px]"><path d="M0 0v7l4-3.500z" fill="#2f4a77" /></svg>
        </button>
      </div>
    </div>
  );
}

function ZoomButton({ label, path }: { label: string; path: string }) {
  return (
    <button type="button" aria-label={label} className="h-[14px] w-[14px] shrink-0">
      <svg viewBox="0 0 14 14" className="h-[14px] w-[14px]">
        <circle cx="7" cy="7" r="6" fill="#e6edf8" stroke="#53678a" />
        <path d={path} stroke="#3a4a68" strokeWidth="1.800" />
      </svg>
    </button>
  );
}

function StatusBar() {
  const [zoom, setZoom] = useState(50);

  return (
    <footer className="flex h-[20px] shrink-0 items-stretch border-t border-[#6f93c6] bg-gradient-to-b from-[#dceafd] via-[#b9d3f6] to-[#d3e4fb] text-[10px] text-[#1e3f7c]">
      <span className="flex w-[45px] items-center border-r border-[#9dbbe4] pl-[5px] whitespace-nowrap">コマンド</span>
      <div className="flex-1" />
      <div className="flex items-center border-l border-white bg-gradient-to-b from-[#a9c6ef] via-[#7fa5dc] to-[#a4c3ee] pr-[5px] pl-[5px]">
        <div className="flex h-[15px] rounded-[2px] border border-[#c7daf5] bg-[#b5cbea]">
          <button type="button" aria-label="標準" className="flex w-[16px] items-center justify-center bg-[#fbd27c]">
            <svg viewBox="0 0 12 10" className="h-[10px] w-[12px]">
              <path d="M.5.5h11v9H.5zM.5 3.500h11M.5 6.500h11M4 .5v9M8 .5v9" fill="#fff" stroke="#6b6252" />
            </svg>
          </button>
          <button type="button" aria-label="ページ レイアウト" className="flex w-[16px] items-center justify-center">
            <svg viewBox="0 0 12 10" className="h-[10px] w-[12px]">
              <path d="M.5.5h11v9H.5z" fill="#b4b8be" stroke="#5f6670" />
              <path d="M3.500 2.500h5v5h-5z" fill="#fff" stroke="#5f6670" />
            </svg>
          </button>
          <button type="button" aria-label="改ページ プレビュー" className="flex w-[16px] items-center justify-center">
            <svg viewBox="0 0 12 10" className="h-[10px] w-[12px]">
              <path d="M.5.5h11v9H.5z" fill="#b4b8be" stroke="#5f6670" />
              <path d="M2 1h3v6H2zM7 1h3v6H7z" fill="#fff" />
            </svg>
          </button>
        </div>
        <span className="w-[37px] text-center text-[#14284e]">100%</span>
        <ZoomButton label="縮小" path="M4 7h6" />
        <input
          type="range"
          aria-label="ズーム"
          min={0}
          max={100}
          value={zoom}
          onChange={(event) => setZoom(Number(event.target.value))}
          className="h-[14px] w-[88px] appearance-none bg-transparent [&::-webkit-slider-runnable-track]:h-px [&::-webkit-slider-runnable-track]:bg-[#dbe7f8] [&::-webkit-slider-thumb]:-mt-[5px] [&::-webkit-slider-thumb]:h-[11px] [&::-webkit-slider-thumb]:w-[8px] [&::-webkit-slider-thumb]:appearance-none [&::-webkit-slider-thumb]:rounded-b-full [&::-webkit-slider-thumb]:border [&::-webkit-slider-thumb]:border-[#53678a] [&::-webkit-slider-thumb]:bg-[#eef3fb]"
        />
        <ZoomButton label="拡大" path="M4 7h6M7 4v6" />
      </div>
    </footer>
  );
}

export default function App() {
  return (
    <div className="relative flex h-screen w-full flex-col overflow-hidden bg-[#bfdbff] font-['Liberation_Sans','Noto_Sans_CJK_JP',sans-serif] [font-feature-settings:'palt']">
      <TitleBar />
      <TabBar />
      <button type="button" aria-label="Office ボタン" className="absolute top-[2px] left-[1px] z-20">
        <OfficeLogo />
      </button>
      <Ribbon />
      <FormulaBar />
      <div className="h-[4px] shrink-0 border-y border-[#8aa9d2] bg-[#c9dcf5]" />
      <main className="flex min-h-0 flex-1">
        <div className="min-w-0 flex-1 overflow-hidden bg-white pb-px">
          <Sheet />
        </div>
        <VerticalScrollbar />
        <div className="w-[4px] shrink-0 bg-[#aec8ef]" />
      </main>
      <SheetTabs />
      <StatusBar />
    </div>
  );
}
